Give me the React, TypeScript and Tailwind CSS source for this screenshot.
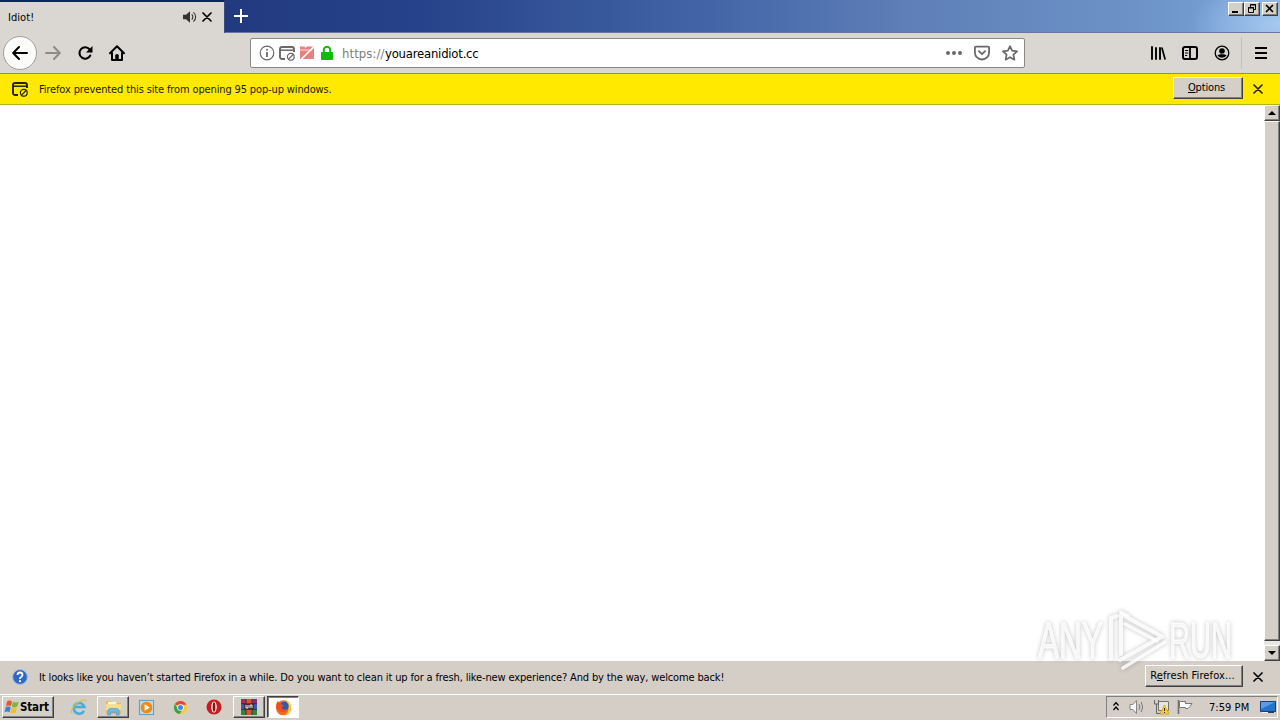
import React from "react";

type IconProps = { className?: string };

const bevel =
  "bg-[#d4d0c8] border border-t-white border-l-white border-b-[#404040] border-r-[#404040] shadow-[inset_-1px_-1px_0_#808080]";

function Close({ className = "" }: IconProps) {
  return (
    <svg viewBox="0 0 10 10" className={"block h-[10px] w-[10px] shrink-0 " + className} fill="none" stroke="currentColor" strokeWidth="1.7" strokeLinecap="round">
      <path d="M1 1 9 9M9 1 1 9" />
    </svg>
  );
}

function PopupBlocked({ className = "" }: IconProps) {
  return (
    <svg viewBox="0 0 16 16" className={"block h-4 w-4 shrink-0 " + className} fill="none" stroke="currentColor">
      <path d="M6 14H3a2 2 0 0 1-2-2V4a2 2 0 0 1 2-2h10a2 2 0 0 1 2 2v3" strokeWidth="1.9" />
      <path d="M1 5.2h14" strokeWidth="1.5" />
      <circle cx="11.8" cy="11.8" r="3.4" strokeWidth="1.2" />
      <path d="m9.5 14.1 4.6-4.6" strokeWidth="1.2" />
    </svg>
  );
}

function TitleBar() {
  return (
    <div className="flex h-[33px] shrink-0 bg-[radial-gradient(ellipse_90px_50px_at_1280px_25px,#a6caf0_0%,#8db3e2_55%,transparent_100%),linear-gradient(to_right,#14287a_0px,#223b80_240px,#26428a_420px,#4264a6_700px,#5f80b8_920px,#6c92c8_1130px,#7da5d8_1280px)]">
      <div className="flex h-[33px] w-[225px] shrink-0 items-center border-t-2 border-r border-t-[#0a246a] border-r-[#3d4c7b] bg-[#dad7d2] pl-2">
        <span className="w-[174px] text-[11px] leading-4 tracking-[0.05px]">Idiot!</span>
        <svg viewBox="0 0 16 16" className="mb-[2px] h-4 w-4" fill="none" stroke="#333">
          <path d="M1 5.8h3l4-3.6v11.6l-4-3.6H1z" fill="#333" stroke="none" />
          <path d="M9.7 5.3c1.5 1.3 1.5 4 0 5.4M11.4 3.4c3 2.4 3 6.8 0 9.2" strokeWidth="1.1" />
        </svg>
        <Close className="mb-[2px] ml-[4px]" />
      </div>
      <div className="flex flex-1 items-start justify-between border-b border-[#6678a0] pt-[2px]">
        <svg viewBox="0 0 14 14" className="mt-[7px] ml-[9px] h-[14px] w-[14px]" stroke="white" strokeWidth="2">
          <path d="M7 0v14M0 7h14" />
        </svg>
        <div className="flex pr-[2px]">
          <div className={"h-[14px] w-4 " + bevel}>
            <svg viewBox="0 0 14 12" className="h-3 w-[14px]"><path d="M3 8h6v2H3z" /></svg>
          </div>
          <div className={"h-[14px] w-4 " + bevel}>
            <svg viewBox="0 0 14 12" className="h-3 w-[14px]" fill="none" stroke="black">
              <path d="M5.500 4V1.500h5v5H8.500M5 2h6" /><path d="M3.500 4.500h5v5h-5zM3 5h6" />
            </svg>
          </div>
          <div className={"ml-[2px] h-[14px] w-4 " + bevel}>
            <svg viewBox="0 0 14 12" className="h-3 w-[14px]" stroke="black" strokeWidth="1.6"><path d="m3 2 7 7M10 2 3 9" /></svg>
          </div>
        </div>
      </div>
    </div>
  );
}

function NavBar() {
  return (
    <div className="flex h-[41px] shrink-0 items-center border-b border-[#8d8a85] bg-[#dad7d2]">
      <div className="ml-[3px] flex h-[34px] w-[34px] items-center justify-center rounded-full border border-[#a19f9b] bg-[#fbfbfa]">
        <svg viewBox="0 0 16 16" className="h-4 w-4" fill="none" stroke="black" strokeWidth="2" strokeLinecap="round" strokeLinejoin="round"><path d="M15 8H1.5M7 2 1.2 8 7 14" /></svg>
      </div>
      <svg viewBox="0 0 16 16" className="ml-[8px] h-4 w-4" fill="none" stroke="#8d8b88" strokeWidth="2" strokeLinecap="round" strokeLinejoin="round"><path d="M1 8h13.5M9 2l5.8 6L9 14" /></svg>
      <svg viewBox="0 0 16 16" className="ml-4 h-4 w-4" fill="none" stroke="black" strokeWidth="2.1"><path d="M12.600 4.400A5.700 5.700 0 1 0 13.300 10.500" strokeLinecap="round" /><path d="M15.5 1v6.500H9z" fill="black" stroke="none" /></svg>
      <svg viewBox="0 0 16 16" className="ml-4 h-4 w-4" fill="none" stroke="black" strokeWidth="2" strokeLinecap="round" strokeLinejoin="round"><path d="M1 8.3 8 1.3l7 7M3 8v7h10V8" /><path d="M6.8 14.5V9.8h2.4v4.7z" fill="black" strokeWidth="1" /></svg>
      <div className="ml-[125px] flex h-[30px] w-[775px] items-center rounded-[2px] border border-[#8b8985] bg-white pl-2 text-[#696969]">
        <svg viewBox="0 0 16 16" className="h-4 w-4" fill="none" stroke="currentColor"><circle cx="8" cy="8" r="6.8" strokeWidth="1.2" /><path d="M8 7v5" strokeWidth="1.8" /><circle cx="8" cy="4.8" r="1" fill="currentColor" stroke="none" /></svg>
        <PopupBlocked className="ml-1" />
        <svg viewBox="0 0 16 16" className="ml-1 h-4 w-4"><path d="M1 1.500h4.500l1 1.500L8 1.500h7V14H1z" fill="#e98080" /><path d="M1 5h12" stroke="#fae0e0" /><path d="M1 15.5 15.5 1" stroke="white" strokeWidth="1.6" /></svg>
        <svg viewBox="0 0 16 16" className="ml-1 h-4 w-4"><path d="M4.8 8V4.9a3.2 3.2 0 0 1 6.4 0V8" fill="none" stroke="#12bc00" strokeWidth="2" /><rect x="2" y="7" width="12" height="8" rx="1" fill="#12bc00" /></svg>
        <span className="ml-[7px] w-[43px] pt-[2px] text-[13px] leading-4 tracking-[0.08px] whitespace-nowrap text-[#7d7d7d]">https://</span>
        <span className="pt-[2px] text-[13px] leading-4 tracking-[-0.23px] text-black">youareanidiot.cc</span>
        <svg viewBox="0 0 16 4" className="mr-3 ml-auto h-1 w-4" fill="currentColor"><circle cx="2" cy="2" r="2" /><circle cx="8" cy="2" r="2" /><circle cx="14" cy="2" r="2" /></svg>
        <svg viewBox="0 0 16 16" className="mr-3 h-4 w-4" fill="none" stroke="currentColor" strokeWidth="1.8" strokeLinecap="round" strokeLinejoin="round"><path d="M1.9 1.6h12.2q1 0 1 1v4.8a7.1 7.1 0 0 1-14.2 0V2.6q0-1 1-1z" /><path d="M4.9 6.2 8 9.2l3.1-3" /></svg>
        <svg viewBox="0 0 16 16" className="mr-[6px] h-4 w-4" fill="none" stroke="currentColor" strokeWidth="1.7" strokeLinejoin="round"><path d="m8 1.2 2.1 4.5 5 .6-3.7 3.4 1 5L8 12.2l-4.4 2.5 1-5L.9 6.3l5-.6z" /></svg>
      </div>
      <div className="ml-auto flex h-full items-center">
        <svg viewBox="0 0 16 16" className="h-4 w-4" fill="none" stroke="black" strokeWidth="2" strokeLinecap="round"><path d="M2 2v12M6 3v11M10 3v11" strokeWidth="1.9" /><path d="m12 3 3 11" strokeWidth="1.7" /></svg>
        <svg viewBox="0 0 16 16" className="ml-4 h-4 w-4" fill="none" stroke="black"><rect x="1" y="2" width="14" height="12" rx="2" strokeWidth="2" /><path d="M8 2v12" strokeWidth="1.8" /><path d="M3 5.5h3.2M3 8h3.2M3 10.5h2.2" strokeWidth="1" /></svg>
        <svg viewBox="0 0 16 16" className="ml-4 h-4 w-4"><circle cx="8" cy="8" r="6.8" fill="none" stroke="black" strokeWidth="1.3" /><circle cx="8" cy="6" r="2.8" /><path d="M3.4 10.2q2.1-1 3-1h3.2q.9 0 3 1a5.3 5.3 0 0 1-9.2 0z" /></svg>
        <div className="ml-[11px] h-[32px] w-px bg-[#c5c2bd]" />
        <svg viewBox="0 0 12 12" className="mr-[13px] ml-[13px] h-3 w-3" stroke="black" strokeWidth="2"><path d="M0 1h12M0 6h12M0 11h12" /></svg>
      </div>
    </div>
  );
}

function ScrollBar() {
  return (
    <div className="flex w-4 shrink-0 flex-col bg-[#e9e7e3]">
      <div className={"flex h-4 items-center justify-center " + bevel}><svg viewBox="0 0 8 4" className="h-1 w-2"><path d="M0 4h8L4 0z" /></svg></div>
      <div className={"h-[520px] " + bevel} />
      <div className="flex-1" />
      <div className={"flex h-4 items-center justify-center " + bevel}><svg viewBox="0 0 8 4" className="h-1 w-2"><path d="M0 0h8L4 4z" /></svg></div>
    </div>
  );
}

function Watermark() {
  return (
    <svg viewBox="0 0 210 70" className="pointer-events-none absolute top-[606px] left-[1032px] h-[70px] w-[210px] overflow-visible [filter:drop-shadow(0_0_2px_rgba(0,0,0,0.28))]">
      <g fill="white" fillOpacity=".8" fontFamily="Liberation Sans Narrow, Liberation Sans, sans-serif" fontSize="50" stroke="white" strokeWidth=".8">
        <text x="6" y="52" textLength="65" lengthAdjust="spacingAndGlyphs">ANY</text>
        <text x="137" y="52" textLength="63" lengthAdjust="spacingAndGlyphs">RUN</text>
      </g>
      <g fill="none" stroke="white" strokeOpacity=".85" strokeWidth="4" strokeLinejoin="round" strokeLinecap="round">
        <path d="M79 53V12L85 10" />
        <path d="M89 48V8L130 30.500 88 54" />
        <path d="M96 10 89 6M93 18l32 17M133 36 91 62" strokeWidth="3.500" />
      </g>
    </svg>
  );
}

function Taskbar() {
  return (
    <div className="flex h-[27px] shrink-0 flex-col bg-[#d4cec7]">
      <div className="mt-px h-px shrink-0 bg-white" />
      <div className="flex flex-1 items-start pt-px">
        <div className={"ml-[2px] flex h-[22px] w-[52px] items-center pl-px " + bevel}>
          <svg viewBox="0 0 16 16" className="h-4 w-4 shrink-0"><path d="M3 2.4q2.6-1.6 5 0L7 7.2q-2.4-1.4-5 0z" fill="#e8572a" /><path d="M8.9 2.8q2.5 1.4 5.8-.2l-1.4 5q-2.6 1.5-5.4.1z" fill="#79b83c" /><path d="M1.7 8.2q2.4-1.5 5 0l-1.2 5q-2.5-1.6-5 0z" fill="#3a82cf" /><path d="M7.6 8.7q2.5 1.3 5.4 0l-1.4 4.8q-2.6 1.4-5.3 0z" fill="#f7bd25" /></svg>
          <span className="text-[11.5px] leading-4 font-bold tracking-[-0.15px]">Start</span>
        </div>
        <div className="ml-[9px] flex h-[22px] w-[32px] items-center justify-center">
          <svg viewBox="0 0 18 18" className="h-[18px] w-[18px]" fill="none"><path d="M14 12.800A5.400 5.400 0 1 1 14.400 9H5.200" stroke="#45aee0" strokeWidth="2.600" /><path d="M2.5 15.4C-.4 15.2 2 8.5 8 4.6c5.1-3.4 8.9-3.9 7.5-.5" stroke="#dcc04c" strokeWidth="1.2" /></svg>
        </div>
        <div className={"ml-[2px] flex h-[22px] w-[32px] items-center justify-center " + bevel}>
          <svg viewBox="0 0 18 18" className="h-[17px] w-[17px]"><path d="M1 2h6l1 2h9v12H1z" fill="#e3bd5c" /><path d="M3 3h9v3H3z" fill="#fdf8d9" /><path d="M1 5.500h16V12H1z" fill="#f5df8e" /><path d="M3 17v-4q0-3 3-3h6q3 0 3 3v4h-3v-3H6v3z" fill="#70b8e5" stroke="#4490c4" strokeWidth=".6" /></svg>
        </div>
        <div className="ml-px flex h-[22px] w-[32px] items-center justify-center">
          <svg viewBox="0 0 18 18" className="h-[17px] w-[17px]"><rect x="1.5" y="1.5" width="15" height="15" fill="#b6dcf0" stroke="#4ba0cc" /><circle cx="9" cy="9" r="6.2" fill="#ef8b15" /><path d="m7 5.5 5.5 3.5L7 12.5z" fill="white" /></svg>
        </div>
        <div className="ml-[2px] flex h-[22px] w-[32px] items-center justify-center">
          <svg viewBox="0 0 16 16" className="h-[15px] w-[15px]"><circle cx="8" cy="8" r="7" fill="#f7cd2f" /><path d="M8 8 2 4.3A7 7 0 0 1 14.3 5H8z" fill="#df483b" /><path d="M2 4.3A7 7 0 0 0 7.3 15l3-5.4L5 9z" fill="#35a451" /><circle cx="8" cy="8" r="3.5" fill="white" /><circle cx="8" cy="8" r="2.7" fill="#4186ed" /></svg>
        </div>
        <div className="ml-[2px] flex h-[22px] w-[32px] items-center justify-center">
          <svg viewBox="0 0 16 16" className="h-4 w-4"><circle cx="8" cy="8" r="7.5" fill="#c31e20" /><ellipse cx="8" cy="8" rx="2.7" ry="5.6" fill="#fff" /><ellipse cx="8" cy="8" rx="1.4" ry="4.7" fill="#8f1012" /></svg>
        </div>
        <div className={"ml-[3px] flex h-[22px] w-[32px] items-center justify-center " + bevel}>
          <svg viewBox="0 0 16 16" className="h-4 w-4"><path d="M0 0h5v5H0z" fill="#a02c62" /><path d="M5 0h6v5H5z" fill="#d9532c" /><path d="M11 0h5v5h-5z" fill="#8c2d72" /><path d="M0 5h16v5H0z" fill="#3c59b5" /><path d="M0 10h16v6H0z" fill="#248a38" /><path d="M5 10h6v6H5z" fill="#d9532c" /><path d="M3 5h10v5H3z" fill="#4a2b38" /><path d="M5 6v3h2V6M9 9V6h2v3" stroke="#eee" fill="none" /><path d="M0 4.7h16M0 10.5h16M5 0v5M11 0v5M5 10v6M11 10v6" stroke="#3f2030" strokeWidth=".8" /></svg>
        </div>
        <div className="ml-[2px] flex h-[22px] w-[32px] items-center justify-center border border-t-[#404040] border-r-white border-b-white border-l-[#404040] bg-white shadow-[inset_1px_1px_0_#808080]">
          <svg viewBox="0 0 18 18" className="h-[17px] w-[17px]"><circle cx="9" cy="9.3" r="8" fill="#f36b20" /><path d="M12 1q6 4 4.8 10-1.1 5-6.5 6.1Q15 14 14 9z" fill="#ffca2c" /><circle cx="9.7" cy="7.7" r="4.800" fill="#2e5cae" /><path d="M1.2 5.5 3 2l2.5 3.2 4 1.3-2.3 2q.3 3.5 5.4 2.5-1.5 4-6 2.8Q1 12.2 1.2 5.5z" fill="#f04d22" /></svg>
        </div>
        <div className="mr-[2px] ml-auto flex h-[22px] w-[172px] items-center border border-t-[#808080] border-r-white border-b-white border-l-[#808080]">
          <svg viewBox="0 0 6 9" className="mb-[2px] ml-[6px] h-[9px] w-[6px]" fill="none" stroke="black" strokeWidth="1.2"><path d="m.5 3.5 2.5-3 2.5 3M.5 8 3 5l2.5 3" /></svg>
          <svg viewBox="0 0 16 16" className="ml-[10px] h-4 w-4" fill="none" stroke="#858585"><path d="M1 5.5h3l3.500-4v13l-3.500-4H1z" fill="#fafafa" /><path d="M10 5.200q1.700 2.800 0 5.600M12.200 3q2.900 5 0 10" stroke="#777" /></svg>
          <svg viewBox="0 0 16 16" className="ml-2 h-4 w-4"><path d="M5.500 2.500h10v9h-10z" fill="#e4e4e4" stroke="#737373" /><path d="M1.500 1v4h4V1M3.500 5v9.500H10" fill="none" stroke="#666" /><path d="m11.500 6 4.500 9H7z" fill="#ffd617" stroke="#c59c00" strokeWidth=".7" /><path d="M11.500 9v3M11.500 13v1" stroke="#332900" /></svg>
          <svg viewBox="0 0 16 16" className="ml-2 h-4 w-4"><path d="M1.500 1v14" stroke="#707070" strokeWidth="1.600" /><path d="M2.500 2.500h6v2h6.500l-2 3-2 2H8.500v-1h-6z" fill="#fafafa" stroke="#777" /></svg>
          <span className="ml-4 w-[40px] pt-px text-[11px] leading-4 tracking-[0.05px] whitespace-nowrap">7:59 PM</span>
          <svg viewBox="0 0 16 16" className="ml-[11px] h-4 w-4"><path d="M.5 2.500h15v10H.5z" fill="#2474c9" stroke="#173d82" /><path d="M1 3h14L1 10z" fill="#5a9de0" /><path d="M2 13.500h6" stroke="#eef7fc" /><path d="M8 13.500h6" stroke="#263e68" /></svg>
        </div>
      </div>
    </div>
  );
}

export default function App() {
  return (
    <div className="relative flex h-[720px] w-[1280px] flex-col overflow-hidden bg-white font-['DejaVu_Sans_Condensed','DejaVu_Sans',sans-serif] text-black [font-stretch:condensed]">
      <TitleBar />
      <NavBar />
      <div className="flex h-[31px] shrink-0 items-center border-b border-[#bcae16] bg-[#ffe900]">
        <PopupBlocked className="ml-3 text-[#272300]" />
        <span className="ml-[11px] pt-[2px] text-[11px] leading-4 tracking-[-0.135px] text-[#1d1a00]">Firefox prevented this site from opening 95 pop-up windows.</span>
        <div className={"mr-[10px] mb-[2px] ml-auto flex h-[22px] w-[70px] items-center justify-center pt-px pr-[3px] text-[11px] tracking-[-0.15px] " + bevel}><span><span className="underline underline-offset-1">O</span>ptions</span></div>
        <Close className="mr-[17px] text-[#272300]" />
      </div>
      <div className="flex min-h-0 flex-1">
        <div className="flex-1 bg-white" />
        <ScrollBar />
      </div>
      <div className="flex h-8 shrink-0 items-center bg-[#d5cec7]">
        <svg viewBox="0 0 16 16" className="ml-3 h-4 w-4"><circle cx="8" cy="8" r="7.4" fill="#2d67c7" stroke="#a6bddc" /><path d="M5.5 6q0-2.5 2.5-2.5T10.5 6Q10.500 7.200 8 9v1" fill="none" stroke="white" strokeWidth="1.8" /><circle cx="8" cy="12.2" r="1.1" fill="white" /></svg>
        <span className="ml-[11px] pt-[2px] text-[11px] leading-4 tracking-[-0.14px] whitespace-nowrap">It looks like you haven’t started Firefox in a while. Do you want to clean it up for a fresh, like-new experience? And by the way, welcome back!</span>
        <div className={"mr-[10px] mb-[2px] ml-auto flex h-[22px] w-[98px] items-center justify-center pt-px pr-[3px] text-[11px] tracking-[0.1px] whitespace-nowrap " + bevel}><span>R<span className="underline underline-offset-1">e</span>fresh Firefox...</span></div>
        <Close className="mr-[17px]" />
      </div>
      <Watermark />
      <Taskbar />
    </div>
  );
}
